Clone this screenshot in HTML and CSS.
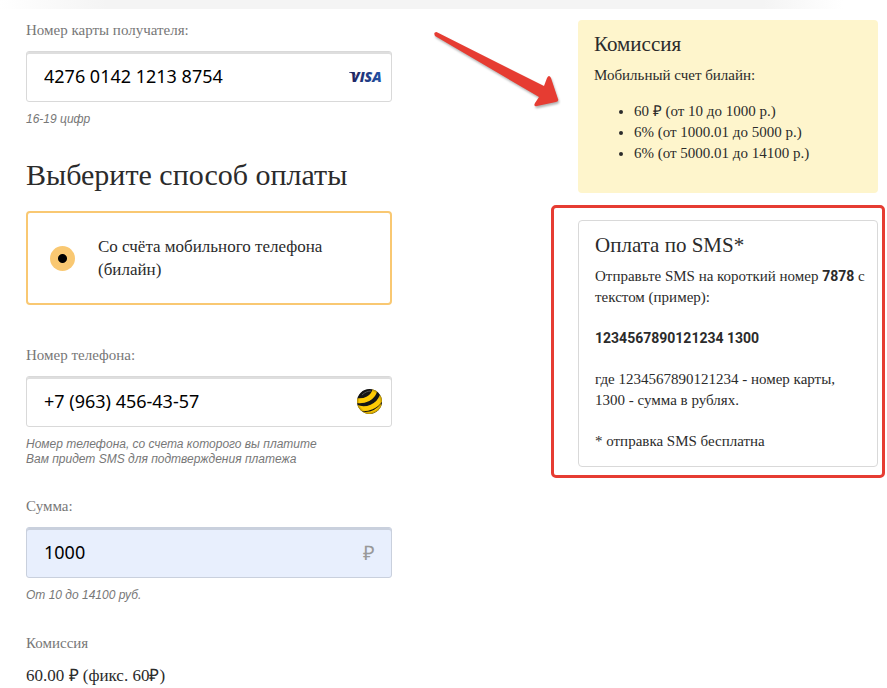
FILE: index.html
```
<!DOCTYPE html>
<html lang="ru">
<head>
  <meta charset="UTF-8">
  <meta name="viewport" content="width=device-width, initial-scale=1.0">
  <title>Оплата</title>
  <link rel="stylesheet" href="styles.css">
</head>
<body>
  <div class="top-line"></div>
  <main class="page">
    <form class="form">
      <div class="field">
        <label for="card">Номер карты получателя:</label>
        <div class="input-box">
          <input type="text" id="card" value="4276 0142 1213 8754">
          <svg class="visa" width="36" height="20" viewBox="0 0 36 20">
            <defs>
              <linearGradient id="visaFill">
                <stop offset="0" stop-color="#20225f"/>
                <stop offset="1" stop-color="#2153a8"/>
              </linearGradient>
            </defs>
            <path d="M2 5h5l2 4C7 7 5 6 2 5.500z" fill="#20225f"/>
            <text x="4" y="15" fill="url(#visaFill)">VISA</text>
          </svg>
        </div>
        <p class="hint">16-19 цифр</p>
      </div>

      <h1>Выберите способ оплаты</h1>
      <label class="method">
        <input type="radio" name="method" checked>
        <span>Со счёта мобильного телефона (билайн)</span>
      </label>

      <div class="field">
        <label for="phone">Номер телефона:</label>
        <div class="input-box">
          <input type="text" id="phone" value="+7 (963) 456-43-57">
          <svg class="ball" width="26" height="26" viewBox="0 0 26 26">
            <defs>
              <clipPath id="ballClip"><circle cx="12.500" cy="12.500" r="12.500"/></clipPath>
              <radialGradient id="ballShade" cx="0.500" cy="0.500" r="0.500">
                <stop offset="0.800" stop-color="#000" stop-opacity="0"/>
                <stop offset="1" stop-color="#000" stop-opacity="0.300"/>
              </radialGradient>
            </defs>
            <g clip-path="url(#ballClip)">
              <rect width="26" height="26" fill="#161616"/>
              <g fill="none" stroke="#ffcb05">
                <path d="M-1 11.500C7 13 17 9 18 0" stroke-width="5"/>
                <path d="M-1 18C9 22.500 22 17 25 7" stroke-width="5"/>
                <path d="M4 24C12 25.500 20 22.500 25 16" stroke-width="3"/>
              </g>
              <path d="M5 6C8 3 11 2 14 2" fill="none" stroke="#555" stroke-width="1"/>
              <circle cx="12.500" cy="12.500" r="12.500" fill="url(#ballShade)"/>
            </g>
          </svg>
        </div>
        <p class="hint">Номер телефона, со счета которого вы платите<br>Вам придет SMS для подтверждения платежа</p>
      </div>

      <div class="field">
        <label for="sum">Сумма:</label>
        <div class="input-box filled">
          <input type="text" id="sum" value="1000">
          <span class="currency">₽</span>
        </div>
        <p class="hint">От 10 до 14100 руб.</p>
      </div>

      <div class="total">
        <h2>Комиссия</h2>
        <p>60.00 ₽ (фикс. 60₽)</p>
      </div>
    </form>

    <aside class="sidebar">
      <svg class="arrow" width="136" height="86" viewBox="0 0 136 86">
        <path d="M6.500 2L114 56 117 48Q119 44 121 48L128 69Q129 71 126 72L107 76Q103 77 105 73L109 67 5 6Q3 2 6.500 2Z"/>
      </svg>
      <section class="commission">
        <h2>Комиссия</h2>
        <p>Мобильный счет билайн:</p>
        <ul>
          <li>60 ₽ (от 10 до 1000 р.)</li>
          <li>6% (от 1000.01 до 5000 р.)</li>
          <li>6% (от 5000.01 до 14100 р.)</li>
        </ul>
      </section>
      <section class="sms">
        <h2>Оплата по SMS*</h2>
        <p>Отправьте SMS на короткий номер <b>7878</b> с текстом (пример):</p>
        <p><b>1234567890121234 1300</b></p>
        <p>где 1234567890121234 - номер карты, 1300 - сумма в рублях.</p>
        <p>* отправка SMS бесплатна</p>
      </section>
    </aside>
  </main>
</body>
</html>
```
FILE: styles.css
```
* {
  box-sizing: border-box;
}
body {
  margin: 0;
  background: #fff;
  color: #2b2b2b;
  font-family: "Liberation Serif", serif;
}
h1, h2, p, ul {
  margin: 0;
  font-weight: normal;
}
.top-line {
  height: 9px;
  background: linear-gradient(to right, #fff, #f4f4f4 12%, #f4f4f4 86%, #fff 95%);
}
.page {
  display: flex;
  justify-content: space-between;
  padding: 11px 9px 0 26px;
}

/* form */
.form {
  flex: 0 1 366px;
}
.field {
  margin-bottom: 29px;
}
.field label, .total h2 {
  display: block;
  margin-bottom: 11px;
  color: #777;
  font-size: 15px;
  line-height: 20px;
}
.input-box {
  display: flex;
  align-items: center;
  height: 51px;
  padding: 0 8px 0 17px;
  border: 1px solid #d9d9d9;
  border-radius: 3px;
  box-shadow: inset 0 2px #dedede;
}
.input-box input {
  flex: 1;
  min-width: 0;
  height: 46px;
  padding: 0 0 2px;
  border: 0;
  outline: 0;
  background: none;
  color: #000;
  font-family: "Noto Sans", sans-serif;
  font-size: 18px;
}
.filled {
  padding-right: 16px;
  border-color: #c9d0dd;
  background: #e8effd;
  box-shadow: inset 0 2px #c9d0dd;
}
.currency {
  color: #999;
  font-size: 20px;
}
.visa text {
  font: italic 800 14px "Open Sans", sans-serif;
}
.hint {
  margin-top: 10px;
  color: #777;
  font: italic 12px/15px "Liberation Sans", sans-serif;
}
h1 {
  margin-bottom: 18px;
  padding-top: 1px;
  font-size: 30px;
  line-height: 36px;
}
.method {
  display: flex;
  align-items: center;
  gap: 23px;
  margin-bottom: 40px;
  padding: 22px;
  border: 2px solid #f9c872;
  border-radius: 4px;
  font-size: 17px;
  line-height: 23px;
}
.method input {
  flex: none;
  appearance: none;
  width: 25px;
  height: 25px;
  margin: 0;
  border-radius: 50%;
  background: radial-gradient(circle, #000 4px, #f9c872 5px);
}
.total {
  padding-top: 1px;
}
.total p {
  font-size: 17px;
  line-height: 24px;
}

/* sidebar */
.sidebar {
  position: relative;
  flex: 0 0 300px;
  font-size: 15px;
  line-height: 21px;
}
.sidebar h2 {
  margin-bottom: 9px;
  font-size: 21px;
  line-height: 24px;
}
.arrow {
  position: absolute;
  top: 10px;
  left: -148px;
  fill: #e63c32;
  filter: drop-shadow(1px 2px 1px rgba(0, 0, 0, 0.3));
}
.commission {
  margin-bottom: 27px;
  padding: 12px 16px 29px;
  border-radius: 4px;
  background: #fef5cc;
}
.commission ul {
  margin-top: 15px;
  padding-left: 40px;
}
.sms {
  position: relative;
  padding: 12px 10px 14px 16px;
  border: 1px solid #d9d9d9;
  border-radius: 4px;
}
.sms p + p {
  margin-top: 20px;
}
.sms b {
  font-family: Roboto, sans-serif;
  font-size: 14px;
  line-height: 1;
}
/* red frame around the sms block */
.sms::after {
  content: "";
  position: absolute;
  top: -16px;
  right: -8px;
  bottom: -12px;
  left: -28px;
  border: 3px solid #e63c32;
  border-radius: 5px;
  pointer-events: none;
}
```
